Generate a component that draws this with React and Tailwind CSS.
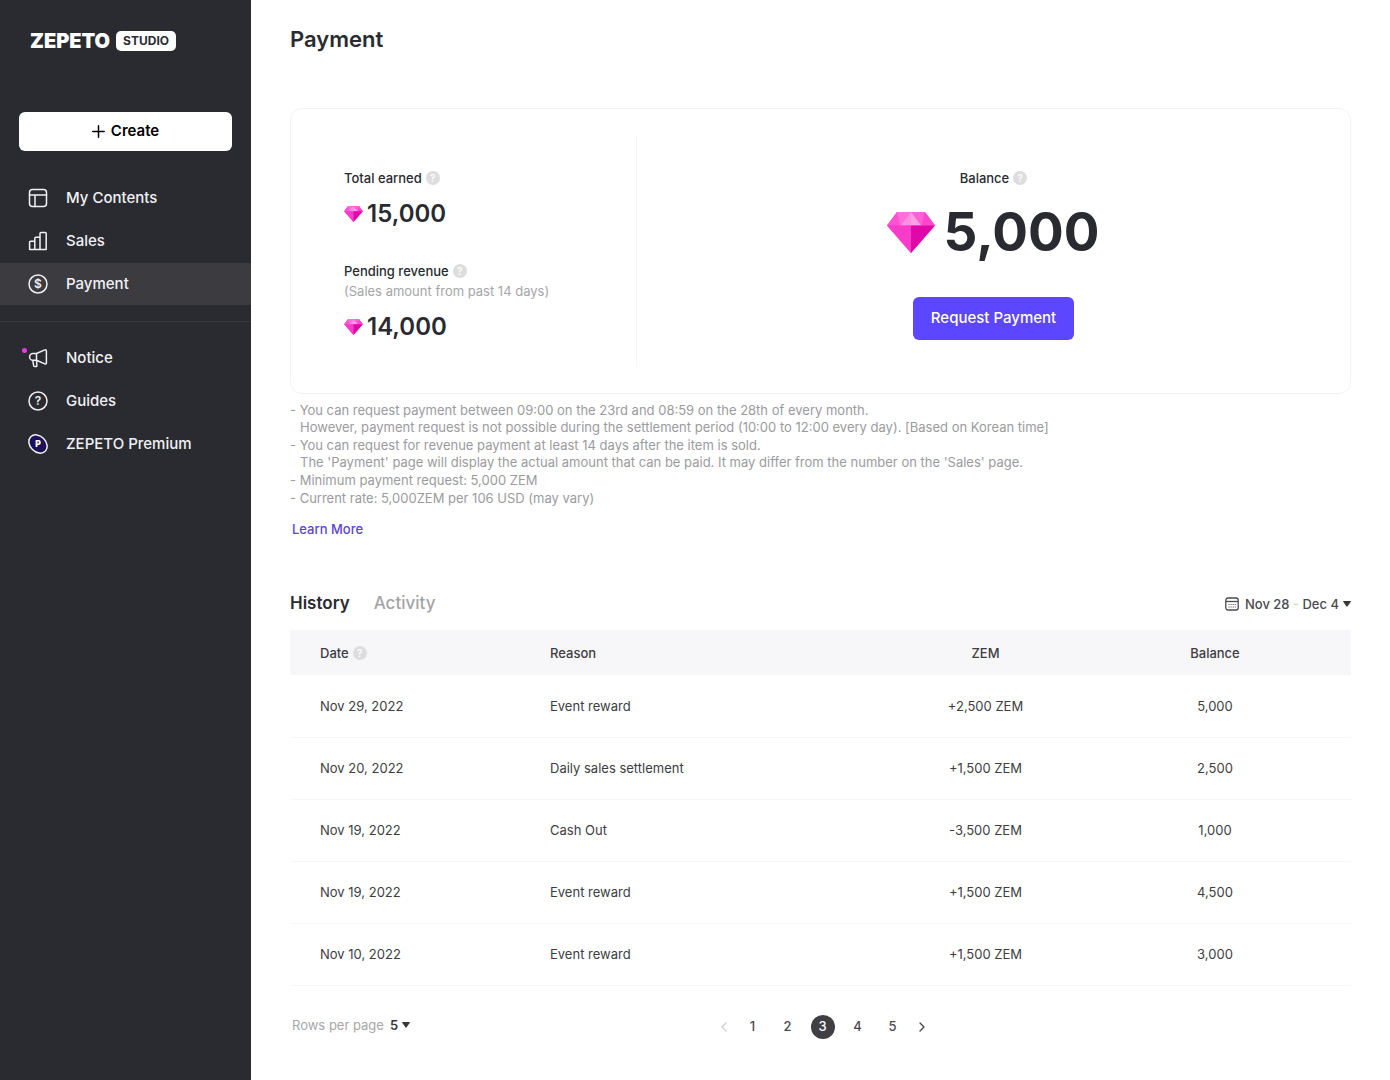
import React from 'react';
import { ChevronLeft, ChevronRight } from 'lucide-react';

const strokeProps = {
    fill: 'none',
    stroke: 'currentColor',
    strokeWidth: 1.5,
    strokeLinecap: 'round',
    strokeLinejoin: 'round',
};

const ContentsIcon = () => (
    <svg width="20" height="20" viewBox="0 0 20 20" aria-hidden="true" {...strokeProps}>
        <rect x="1.5" y="1.5" width="17" height="17" rx="3" />
        <path d="M1.5 7h17M7 7v11.5" />
    </svg>
);

const SalesIcon = () => (
    <svg width="20" height="20" viewBox="0 0 20 20" aria-hidden="true" {...strokeProps}>
        <path d="M1.6 18.4V11.2a1 1 0 0 1 1-1h4.2v8.2zM6.8 18.4V7.2a1 1 0 0 1 1-1h4.2v12.2zM12 18.4V2.6a1 1 0 0 1 1-1h4.2a1 1 0 0 1 1 1v15.8z" />
    </svg>
);

const PaymentIcon = () => (
    <svg width="20" height="20" viewBox="0 0 20 20" aria-hidden="true">
        <circle cx="10" cy="10" r="9" {...strokeProps} />
        <text x="10" y="14.2" textAnchor="middle" fontSize="12" fontWeight="600" fill="currentColor">$</text>
    </svg>
);

const NoticeIcon = () => (
    <svg width="20" height="20" viewBox="0 0 20 20" aria-hidden="true" {...strokeProps}>
        <path d="M8.5 5.5H5a3.3 3.3 0 0 0 0 6.8h3.5zM8.5 5.5l8.3-3.6a1.1 1.1 0 0 1 1.6 1v12a1.1 1.1 0 0 1-1.6 1l-8.3-3.6M4.8 12.3l.8 5.2a1 1 0 0 0 1 .9h1.5a.8.8 0 0 0 .8-.9l-.4-5.2" />
    </svg>
);

const GuidesIcon = () => (
    <svg width="20" height="20" viewBox="0 0 20 20" aria-hidden="true">
        <circle cx="10" cy="10" r="9" {...strokeProps} />
        <text x="10" y="14.3" textAnchor="middle" fontSize="12" fontWeight="600" fill="currentColor">?</text>
    </svg>
);

const PremiumIcon = () => (
    <svg width="20" height="20" viewBox="0 0 20 20" aria-hidden="true">
        <ellipse cx="10" cy="10" rx="10.2" ry="7.9" transform="rotate(45 10 10)" fill="#1c1058" stroke="#f1f1f4" strokeWidth="1.5" />
        <text x="10" y="13" textAnchor="middle" fontSize="8.5" fontWeight="900" fill="#fff">P</text>
    </svg>
);

const CalendarIcon = () => (
    <svg width="14" height="14" viewBox="0 0 14 14" aria-hidden="true" fill="none" stroke="#4a4a4f">
        <rect x="0.8" y="1" width="12.4" height="12" rx="2.2" strokeWidth="1.3" />
        <path d="M1 4.5h12" strokeWidth="1.3" />
        <path d="M3.5 7.5h7.5M3.5 10h7.5" strokeWidth="1" strokeDasharray="1 1.1" />
    </svg>
);

const Caret = () => (
    <svg width="8" height="6" viewBox="0 0 8 6" aria-hidden="true">
        <path d="M.6 0h6.8a.5.5 0 0 1 .4.8L4.4 5.6a.5.5 0 0 1-.8 0L.2.8A.5.5 0 0 1 .6 0z" fill="#36373c" />
    </svg>
);

const Gem = ({ className }) => (
    <svg className={className} viewBox="0 0 48 41" aria-hidden="true">
        <path d="M10 0h28l10 13.5L24 41 0 13.5z" fill="#ff4fd2" />
        <path d="M10 0L0 13.5h13.5z" fill="#ff52d2" />
        <path d="M10 0h14L13.5 13.5z" fill="#ff6fd8" />
        <path d="M24 0L13.5 13.5H24z" fill="#ff8fe0" />
        <path d="M24 0l10.5 13.5H24z" fill="#ff9fe5" />
        <path d="M24 0h14l-3.5 13.5z" fill="#ff62d6" />
        <path d="M38 0l10 13.5H34.5z" fill="#ff45cb" />
        <path d="M0 13.5h24V41z" fill="#f63cc8" />
        <path d="M24 13.5h24L24 41z" fill="#e008a8" />
    </svg>
);

const Help = ({ label }) => (
    <button type="button" aria-label={label} className="w-3.5 h-3.5 rounded-full bg-[#dddddd] text-white text-[10px] leading-none font-semibold flex items-center justify-center">
        ?
    </button>
);

const mainMenu = [
    { name: 'My Contents', icon: ContentsIcon },
    { name: 'Sales', icon: SalesIcon },
    { name: 'Payment', icon: PaymentIcon, active: true },
];

const subMenu = [
    { name: 'Notice', icon: NoticeIcon, dot: true },
    { name: 'Guides', icon: GuidesIcon },
    { name: 'ZEPETO Premium', icon: PremiumIcon },
];

const rows = [
    { date: 'Nov 29, 2022', reason: 'Event reward', zem: '+2,500 ZEM', balance: '5,000' },
    { date: 'Nov 20, 2022', reason: 'Daily sales settlement', zem: '+1,500 ZEM', balance: '2,500' },
    { date: 'Nov 19, 2022', reason: 'Cash Out', zem: '-3,500 ZEM', balance: '1,000' },
    { date: 'Nov 19, 2022', reason: 'Event reward', zem: '+1,500 ZEM', balance: '4,500' },
    { date: 'Nov 10, 2022', reason: 'Event reward', zem: '+1,500 ZEM', balance: '3,000' },
];

const Menu = ({ items }) => (
    <ul className="flex flex-col gap-px">
        {items.map(({ name, icon: Icon, active, dot }) => (
            <li key={name}>
                <a
                    href="#"
                    aria-current={active ? 'page' : undefined}
                    className={`flex items-center gap-[18px] h-[42px] pl-7 text-[15px] font-medium text-[#f1f1f4] ${active ? 'bg-[#3b3b40]' : ''}`}
                >
                    <span className="relative">
                        <Icon />
                        {dot && <span className="absolute -left-1.5 top-0 w-[5px] h-[5px] rounded-full bg-[#e83be8]"></span>}
                    </span>
                    {name}
                </a>
            </li>
        ))}
    </ul>
);

const App = () => {
    return (
        <div className="flex min-h-screen bg-white text-[#2a2b31] font-['Inter',sans-serif]">
            {/* Sidebar */}
            <aside className="w-[251px] shrink-0 bg-[#2a2b31] pt-[30px]">
                <a href="#" className="flex items-center gap-1.5 h-[22px] pl-[30px] text-white">
                    <span className="text-xl leading-[22px] font-black">ZEPETO</span>
                    <span className="bg-white text-[#2a2b31] rounded-[5px] px-[7px] text-xs leading-5 font-bold">STUDIO</span>
                </a>
                <div className="px-[19px] mt-[60px] mb-[26px]">
                    <button type="button" className="w-full h-[39px] bg-white rounded-md text-black text-[15px] font-semibold flex items-center justify-center gap-1.5">
                        <svg width="13" height="13" viewBox="0 0 13 13" aria-hidden="true" stroke="currentColor" strokeWidth="1.5" strokeLinecap="round">
                            <path d="M6.5.8v11.4M.8 6.5h11.4" />
                        </svg>
                        Create
                    </button>
                </div>
                <nav>
                    <Menu items={mainMenu} />
                    <hr className="mt-4 mb-[15px] border-[#36373c]" />
                    <Menu items={subMenu} />
                </nav>
            </aside>

            <main className="flex-1 px-[39px] pt-[23px] pb-8">
                <h1 className="text-[22px] leading-8 font-semibold">Payment</h1>

                {/* Earnings summary */}
                <section className="mt-[53px] flex items-center h-[286px] border border-[#f3f3f4] rounded-xl">
                    <div className="w-[346px] h-[232px] border-r border-[#f5f5f6] pl-[53px] pt-[33px]">
                        <div className="flex items-center gap-1 text-[13px] leading-5 font-medium">
                            Total earned <Help label="About total earned" />
                        </div>
                        <div className="flex items-center gap-1 mt-2.5 text-2xl leading-8 font-semibold">
                            <Gem className="w-[19px] h-4" />
                            15,000
                        </div>
                        <div className="flex items-center gap-1 mt-[31px] text-[13px] leading-5 font-medium">
                            Pending revenue <Help label="About pending revenue" />
                        </div>
                        <p className="text-[13px] leading-5 text-[#a6a6a9]">(Sales amount from past 14 days)</p>
                        <div className="flex items-center gap-1 mt-2.5 text-2xl leading-8 font-semibold">
                            <Gem className="w-[19px] h-4" />
                            14,000
                        </div>
                    </div>
                    <div className="flex-1 h-[232px] flex flex-col items-center pt-[33px]">
                        <div className="flex items-center gap-1 text-[13px] leading-5 font-medium">
                            Balance <Help label="About balance" />
                        </div>
                        <div className="flex items-center gap-2 mt-3 text-[53px] leading-[64px] font-bold">
                            <Gem className="w-12 h-[41px]" />
                            5,000
                        </div>
                        <button type="button" className="mt-[33px] h-[43px] px-[18px] rounded-md bg-[#5c46ff] text-white text-[15px] font-medium">
                            Request Payment
                        </button>
                    </div>
                </section>

                {/* Notes */}
                <ul className="mt-2 flex flex-col gap-px text-[13px] leading-[17px] text-[#9b9b9e]">
                    <li>
                        - You can request payment between 09:00 on the 23rd and 08:59 on the 28th of every month.
                        <p className="pl-2.5">However, payment request is not possible during the settlement period (10:00 to 12:00 every day). [Based on Korean time]</p>
                    </li>
                    <li>
                        - You can request for revenue payment at least 14 days after the item is sold.
                        <p className="pl-2.5">The 'Payment' page will display the actual amount that can be paid. It may differ from the number on the 'Sales' page.</p>
                    </li>
                    <li>- Minimum payment request: 5,000 ZEM</li>
                    <li>- Current rate: 5,000ZEM per 106 USD (may vary)</li>
                </ul>
                <a href="#" className="inline-block mt-3 ml-0.5 text-[13px] leading-5 font-medium text-[#5a45d6]">Learn More</a>

                {/* History */}
                <section className="mt-[51px]">
                    <div className="flex items-center justify-between">
                        <div role="tablist" className="flex gap-6 text-[17px] leading-6">
                            <button type="button" role="tab" aria-selected="true" className="font-semibold">History</button>
                            <button type="button" role="tab" aria-selected="false" className="font-medium text-[#a3a3a6]">Activity</button>
                        </div>
                        <button type="button" className="flex items-center pt-0.5 text-[13px] leading-5 font-medium text-[#4a4a4f]">
                            <CalendarIcon />
                            <span className="ml-1.5 mr-1">Nov 28 <span className="text-[#cfcfd2]">-</span> Dec 4</span>
                            <Caret />
                        </button>
                    </div>

                    <table className="w-full mt-[15px] table-fixed text-[13px] leading-5 text-[#3d3d42]">
                        <thead>
                            <tr className="h-[45px] bg-[#f7f7fa]">
                                <th className="w-[230px] pl-[30px] text-left font-medium">
                                    <span className="flex items-center gap-1">Date <Help label="About date" /></span>
                                </th>
                                <th className="pl-[30px] text-left font-medium">Reason</th>
                                <th className="w-[187px] font-medium">ZEM</th>
                                <th className="w-[272px] font-medium">Balance</th>
                            </tr>
                        </thead>
                        <tbody>
                            {rows.map((row) => (
                                <tr key={row.date + row.balance} className="h-[62px] border-b border-[#f7f7f8]">
                                    <td className="pl-[30px]">{row.date}</td>
                                    <td className="pl-[30px]">{row.reason}</td>
                                    <td className="text-center">{row.zem}</td>
                                    <td className="text-center">{row.balance}</td>
                                </tr>
                            ))}
                        </tbody>
                    </table>

                    <div className="grid grid-cols-[1fr_auto_1fr] items-start mt-[29px]">
                        <div className="flex items-center pl-0.5 text-[13px] leading-5">
                            <label htmlFor="rows-per-page" className="text-[#a6a6a9]">Rows per page</label>
                            <select id="rows-per-page" defaultValue="5" className="appearance-none w-3 ml-1.5 font-semibold text-[#36373c] bg-transparent">
                                <option>5</option>
                                <option>10</option>
                            </select>
                            <Caret />
                        </div>
                        <nav aria-label="Pagination" className="flex items-center gap-[11px] pl-1 text-[13px] font-medium text-[#4a4a4f]">
                            <button type="button" aria-label="Previous page" className="w-3 flex justify-center text-[#cfcfd2]"><ChevronLeft className="w-4 h-4 shrink-0" /></button>
                            {[1, 2, 3, 4, 5].map((page) => (
                                <button
                                    key={page}
                                    type="button"
                                    className={`w-6 h-6 rounded-full ${page === 3 ? 'bg-[#3f3f44] text-white' : ''}`}
                                >
                                    {page}
                                </button>
                            ))}
                            <button type="button" aria-label="Next page" className="w-3 flex justify-center"><ChevronRight className="w-4 h-4 shrink-0" /></button>
                        </nav>
                    </div>
                </section>
            </main>
        </div>
    );
};

export default App;
